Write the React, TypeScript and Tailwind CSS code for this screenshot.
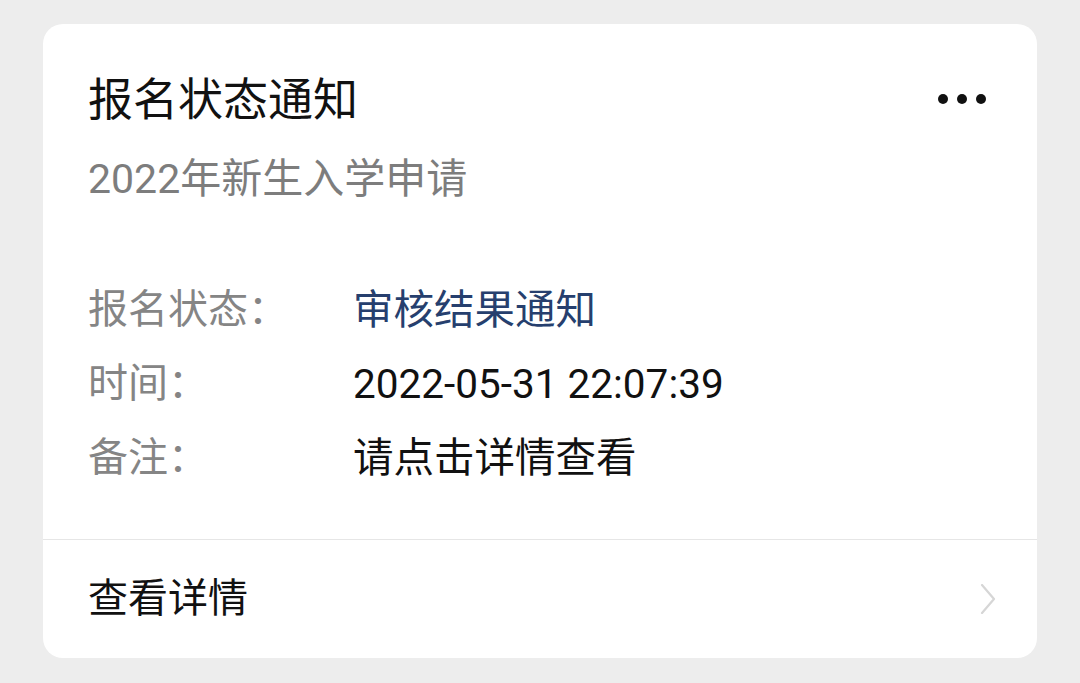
export default function App() {
  const rows = [
    { label: "报名状态：", value: "审核结果通知", cls: "text-[#263f6e]" },
    { label: "时间：", value: "2022-05-31 22:07:39", cls: "text-[#111111]" },
    { label: "备注：", value: "请点击详情查看", cls: "text-[#111111]" },
  ];

  return (
    <div
      className="min-h-[683px] w-full bg-[#ededed] pt-[24px]"
      style={{ fontFamily: "Roboto, 'Noto Sans CJK SC', sans-serif" }}
    >
      <div className="ml-[43px] w-[994px] h-[634px] rounded-[20px] bg-white flex flex-col overflow-hidden">
        <div className="pl-[45px] pr-[51px] pt-[47px]">
          <div className="flex items-center justify-between">
            <h1 className="text-[45px] leading-[60px] text-[#111111] font-normal">报名状态通知</h1>
            <div className="flex gap-[9px] items-center mb-[4px]">
              <span className="w-[10px] h-[10px] rounded-full bg-[#111111]" />
              <span className="w-[10px] h-[10px] rounded-full bg-[#111111]" />
              <span className="w-[10px] h-[10px] rounded-full bg-[#111111]" />
            </div>
          </div>
          <p className="mt-[18px] text-[41px] leading-[60px] text-[#7d7d7d]">2022年新生入学申请</p>

          <div className="mt-[64px] flex flex-col">
            {rows.map((r) => (
              <div key={r.label} className="flex h-[74px] items-center text-[40px]">
                <span className="w-[265px] text-[#858585]">{r.label}</span>
                <span className={r.cls + " text-[40.5px]"}>{r.value}</span>
              </div>
            ))}
          </div>
        </div>

        <div className="mt-[44px] border-t border-[#e6e6e6] flex-1 flex items-center justify-between pl-[45px] pr-[41px]">
          <span className="text-[40px] text-[#111111]">查看详情</span>
          <svg width="16" height="30" viewBox="0 0 16 30" fill="none">
            <path d="M2 1 L14 15 L2 29" stroke="#d6d6d6" strokeWidth="2.2" strokeLinecap="round" strokeLinejoin="round" />
          </svg>
        </div>
      </div>
    </div>
  );
}
